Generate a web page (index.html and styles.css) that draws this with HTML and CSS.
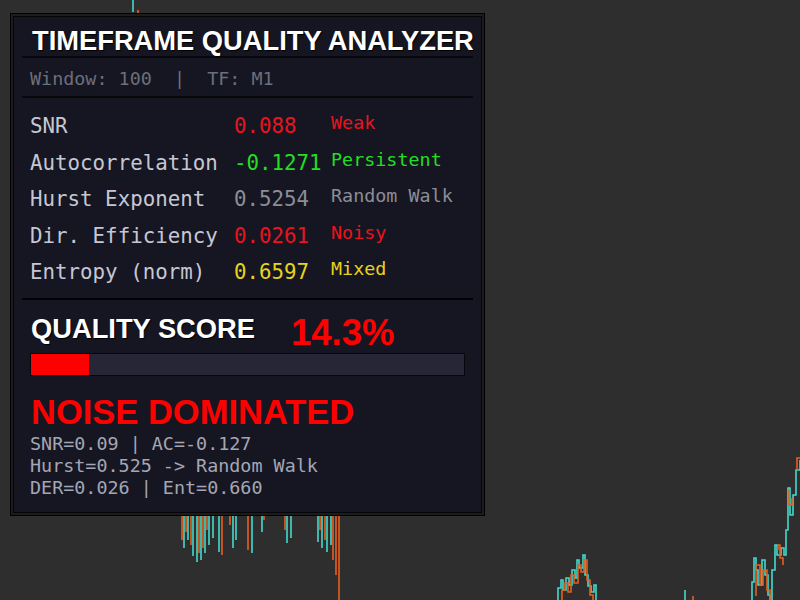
FILE: index.html
```html
<!DOCTYPE html>
<html lang="en">
<head>
    <meta charset="UTF-8">
    <meta name="viewport" content="width=device-width, initial-scale=1.0">
    <title>Timeframe Quality Analyzer</title>
    <link rel="stylesheet" href="styles.css">
</head>
<body>
    <!-- tick chart behind the panel -->
    <svg class="chart" width="800" height="600" viewBox="0 0 800 600">
        <g class="up">
            <path d="M133 0 V12"/>
            <path d="M184 500 V548 M188 500 V540 M193 500 V556 M197 500 V562 M201 500 V560 M205 500 V553 M209 500 V545 M213 500 V538 M219 500 V552 M233 500 V548 M236 500 V540 M252 500 V553 M262 500 V532 M287 500 V543 M291 500 V538 M318 500 V542 M322 500 V548 M327 500 V552 M331 500 V545"/>
            <path d="M558 600 V588 H561 V580 H563 V590 H566 V578 H569 V585 H572 V570 H575 V578 H577 V560 H579 V568 H583 V555 H585 V575 H588 V586 H591 V592 H594 V585 H596 V600"/>
            <path d="M685 600 V590"/>
            <path d="M752 600 V582 H754 V558 H756 V570 H758 V585 H762 V560 H765 V575 H768 V595 H770 V600"/>
            <path d="M772 600 V570 H775 V545 H777 V555 H781 V548 H784 V555 H786 V530 H788 V488 H790 V515 H793 V495 H796 V470 H800 V460"/>
        </g>
        <g class="down">
            <path d="M138 10 V13"/>
            <path d="M182 500 V540 M186 500 V532 M191 500 V545 M199 500 V553 M203 500 V548 M207 500 V530 M222 500 V555 M230 500 V525 M248 500 V550 M264 500 V520 M285 500 V530 M320 500 V530 M325 500 V540 M333 500 V560 M336 500 V575 M339 500 V600"/>
            <path d="M562 600 V590 H565 V583 H568 V592 H571 V575 H574 V583 H578 V565 H581 V572 H584 V560 H587 V580 H590 V595 H593 V600"/>
            <path d="M693 600 V596"/>
            <path d="M756 596 V565 H760 V585 H763 V570 H767 V590 H770 V600"/>
            <path d="M778 550 V545 H780 V558 H783 V565 M789 490 V505 H792 V498 M797 470 V458 H800"/>
        </g>
    </svg>

    <div class="panel">
        <div class="panel-body">
            <div class="title">TIMEFRAME QUALITY ANALYZER</div>
            <div class="rule"></div>
            <div class="meta">Window: 100  |  TF: M1</div>
            <div class="rule"></div>

            <div class="metrics">
                <div class="row">
                    <span class="label">SNR</span><span class="value bad">0.088</span><span class="status bad">Weak</span>
                </div>
                <div class="row">
                    <span class="label">Autocorrelation</span><span class="value good">-0.1271</span><span class="status good">Persistent</span>
                </div>
                <div class="row">
                    <span class="label">Hurst Exponent</span><span class="value neutral">0.5254</span><span class="status neutral">Random Walk</span>
                </div>
                <div class="row">
                    <span class="label">Dir. Efficiency</span><span class="value bad">0.0261</span><span class="status bad">Noisy</span>
                </div>
                <div class="row">
                    <span class="label">Entropy (norm)</span><span class="value mixed">0.6597</span><span class="status mixed">Mixed</span>
                </div>
            </div>
            <div class="rule thick"></div>

            <div class="score-row">
                <div class="score-label">QUALITY SCORE</div>
                <div class="score-value">14.3%</div>
            </div>
            <div class="bar">
                <div class="fill" style="width: 13.5%"></div>
            </div>

            <div class="verdict">NOISE DOMINATED</div>
            <div class="details">
                <div class="line">SNR=0.09 | AC=-0.127</div>
                <div class="line">Hurst=0.525 -&gt; Random Walk</div>
                <div class="line">DER=0.026 | Ent=0.660</div>
            </div>
        </div>
    </div>
</body>
</html>
```

FILE: styles.css
```css
body {
    margin: 0;
    padding: 0;
    background-color: #2e2e2e;
    font-family: "DejaVu Sans Mono", "Liberation Mono", monospace;
    overflow: hidden;
}
.chart {
    position: absolute;
    left: 0;
    top: 0;
}
.chart path {
    fill: none;
    stroke-width: 1.6;
}
.chart .up path {
    stroke: #43d9cb;
}
.chart .down path {
    stroke: #e5601e;
}
.panel {
    position: relative;
    margin: 13px 0 0 10px;
    width: 475px;
    height: 503px;
    box-sizing: border-box;
    border: 1px solid #000;
    background-color: #1c1c1f;
    padding: 2px;
}
.panel-body {
    height: 100%;
    box-sizing: border-box;
    border: 1px solid #050508;
    background-color: #161622;
    padding: 9px 8px 0 8px;
}
.title {
    font-family: "Liberation Sans", Arial, sans-serif;
    font-weight: bold;
    font-size: 27.3px;
    line-height: 30px;
    color: #fff;
    padding-left: 10px;
    white-space: nowrap;
    text-shadow: 1px 1px 1px #000;
}
.rule {
    height: 2px;
    background-color: #08080c;
}
.rule.thick {
    height: 2px;
    background-color: #020204;
    margin-top: 7px;
}
.meta {
    margin: 10px 0 6px;
    padding-left: 8px;
    font-size: 18.4px;
    line-height: 22px;
    color: #6c6e7c;
    white-space: pre;
}
.metrics {
    margin-top: 10px;
    padding-left: 8px;
}
.row {
    height: 36.5px;
    font-size: 20.8px;
    line-height: 36.5px;
    white-space: nowrap;
}
.label {
    display: inline-block;
    width: 204px;
    color: #c6c7d3;
}
.value {
    display: inline-block;
    width: 97px;
}
.status {
    font-size: 18.4px;
    line-height: 20px;
    vertical-align: 4px;
}
.bad { color: #e8141e; }
.good { color: #22df22; }
.neutral { color: #8c8d96; }
.mixed { color: #e6d31e; }

.score-row {
    display: flex;
    align-items: flex-start;
    margin-top: 14px;
    padding-left: 9px;
    height: 38px;
    font-family: "Liberation Sans", Arial, sans-serif;
    font-weight: bold;
    white-space: nowrap;
}
.score-label {
    width: 260px;
    font-size: 27.3px;
    line-height: 30px;
    color: #fff;
    text-shadow: 1px 1px 1px #000;
}
.score-value {
    font-size: 36.5px;
    line-height: 38px;
    color: #f00;
}
.bar {
    margin: 1px 8px 0;
    height: 23px;
    box-sizing: border-box;
    border: 1px solid #08080c;
    background-color: #262636;
}
.fill {
    height: 100%;
    background-color: #f00;
}
.verdict {
    margin-top: 18px;
    padding-left: 9px;
    font-family: "Liberation Sans", Arial, sans-serif;
    font-weight: bold;
    font-size: 34.5px;
    line-height: 36px;
    color: #f00;
    white-space: nowrap;
}
.details {
    margin-top: 3px;
    padding-left: 8px;
    font-size: 18.4px;
    line-height: 22px;
    color: #a4a6b4;
}
.details .line {
    white-space: pre;
}
```
